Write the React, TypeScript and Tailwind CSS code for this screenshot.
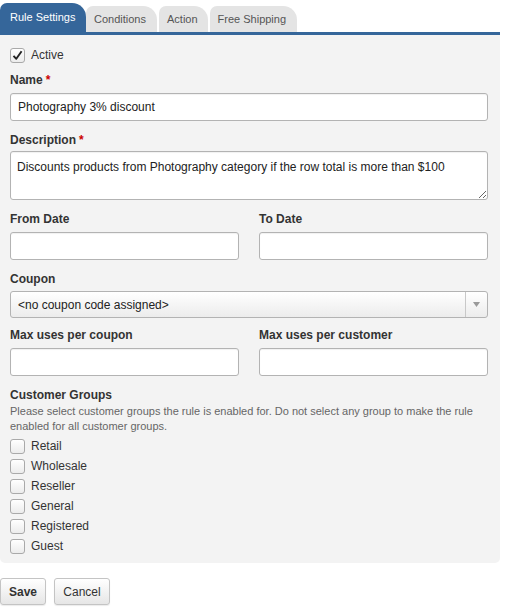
import { ReactNode } from 'react';

const groups = ['Retail', 'Wholesale', 'Reseller', 'General', 'Registered', 'Guest'];

function Box({ checked }: { checked?: boolean }) {
  return (
    <span className="flex h-[15px] w-[15px] shrink-0 items-center justify-center rounded-[3px] border border-[#a9a9a9] bg-gradient-to-b from-white to-[#ececec]">
      {checked && (
        <svg width="11" height="11" viewBox="0 0 11 11">
          <path d="M1.5 5.8 L4.3 8.8 L9.6 1.2" fill="none" stroke="#222" strokeWidth="1.9" strokeLinejoin="round" />
        </svg>
      )}
    </span>
  );
}

function Label({ children, required }: { children: ReactNode; required?: boolean }) {
  return (
    <div className="h-[16px] text-[12px] font-bold leading-[16px] text-[#333]">
      {children}
      {required && <span className="ml-[3px] text-[#c00]">*</span>}
    </div>
  );
}

function TextInput({ value }: { value?: string }) {
  return (
    <input
      readOnly
      defaultValue={value}
      className="h-[28px] w-full rounded-[3px] border border-[#b3b3b3] bg-white px-[7px] text-[12px] text-[#222] shadow-[inset_0_1px_1px_rgba(0,0,0,0.06)] outline-none"
    />
  );
}

export default function App() {
  return (
    <div className="min-h-[611px] w-[508px] bg-white font-['Liberation_Sans',Arial,sans-serif] text-[12px] text-[#333]">
      <div className="w-[500px]">
        {/* tabs */}
        <div className="flex h-[35px] items-end border-b-[3px] border-[#35669a]">
          <div className="flex h-[29px] w-[86px] items-center rounded-tl-[7px] rounded-tr-[14px] bg-[#35669a] pb-[1px] pl-[10px] text-[11px] text-white">
            Rule Settings
          </div>
          <div className="flex h-[26px] items-center rounded-tl-[7px] rounded-tr-[14px] bg-[#e4e4e4] pl-[8px] pr-[11px] pt-[1px] text-[11px] text-[#555]">
            Conditions
          </div>
          <div className="ml-[2px] flex h-[26px] items-center rounded-tl-[7px] rounded-tr-[14px] bg-[#e4e4e4] pl-[8px] pr-[10px] pt-[1px] text-[11px] text-[#555]">
            Action
          </div>
          <div className="ml-[2px] flex h-[26px] items-center rounded-tl-[7px] rounded-tr-[14px] bg-[#e4e4e4] pl-[8px] pr-[11px] pt-[1px] text-[11px] text-[#555]">
            Free Shipping
          </div>
        </div>

        {/* panel */}
        <div className="rounded-b-[5px] bg-[#f3f3f3] pb-[7px] pl-[10px] pr-[12px] pt-[10px]">
          <div className="flex h-[20px] items-center gap-[6px]">
            <Box checked />
            <span className="text-[12px]">Active</span>
          </div>

          <div className="mt-[7px]">
            <Label required>Name</Label>
            <div className="mt-[5px]">
              <TextInput value="Photography 3% discount" />
            </div>
          </div>

          <div className="mt-[11px]">
            <Label required>Description</Label>
            <textarea
              readOnly
              defaultValue="Discounts products from Photography category if the row total is more than $100"
              className="mt-[3px] block h-[49px] w-full resize-y rounded-[3px] border border-[#b3b3b3] bg-white px-[6px] pt-[6px] text-[12px] leading-[18px] text-[#222] shadow-[inset_0_1px_1px_rgba(0,0,0,0.06)] outline-none"
            />
          </div>

          <div className="mt-[11px] grid grid-cols-2 gap-x-[20px]">
            <div>
              <Label>From Date</Label>
              <div className="mt-[5px]">
                <TextInput />
              </div>
            </div>
            <div>
              <Label>To Date</Label>
              <div className="mt-[5px]">
                <TextInput />
              </div>
            </div>
          </div>

          <div className="mt-[11px]">
            <Label>Coupon</Label>
            <div className="mt-[4px] flex h-[27px] w-full items-stretch rounded-[3px] border border-[#b3b3b3] bg-gradient-to-b from-white to-[#ececec]">
              <div className="flex flex-1 items-center pl-[7px] text-[12px] text-[#222]">&lt;no coupon code assigned&gt;</div>
              <div className="flex w-[22px] items-center justify-center border-l border-[#c8c8c8]">
                <svg width="7" height="5" viewBox="0 0 7 5">
                  <path d="M0 0 H7 L3.5 5 Z" fill="#9a9a9a" />
                </svg>
              </div>
            </div>
          </div>

          <div className="mt-[9px] grid grid-cols-2 gap-x-[20px]">
            <div>
              <Label>Max uses per coupon</Label>
              <div className="mt-[5px]">
                <TextInput />
              </div>
            </div>
            <div>
              <Label>Max uses per customer</Label>
              <div className="mt-[5px]">
                <TextInput />
              </div>
            </div>
          </div>

          <div className="mt-[11px]">
            <Label>Customer Groups</Label>
            <p className="mt-[1px] text-[11px] leading-[15px] text-[#666]">
              Please select customer groups the rule is enabled for. Do not select any group to make the rule
              <br />
              enabled for all customer groups.
            </p>
            <div className="mt-[2px] flex flex-col">
              {groups.map((g) => (
                <label key={g} className="flex h-[20px] items-center gap-[6px]">
                  <Box />
                  <span className="text-[12px]">{g}</span>
                </label>
              ))}
            </div>
          </div>
        </div>
      </div>

      {/* actions */}
      <div className="mt-[15px] flex gap-[8px]">
        <button className="h-[27px] w-[46px] rounded-[3px] border border-[#c4c4c4] bg-gradient-to-b from-white to-[#e6e6e6] text-[12px] font-bold text-[#333] shadow-[0_1px_1px_rgba(0,0,0,0.08)]">
          Save
        </button>
        <button className="h-[27px] w-[56px] rounded-[3px] border border-[#c4c4c4] bg-gradient-to-b from-white to-[#e6e6e6] text-[12px] text-[#333] shadow-[0_1px_1px_rgba(0,0,0,0.08)]">
          Cancel
        </button>
      </div>
    </div>
  );
}
